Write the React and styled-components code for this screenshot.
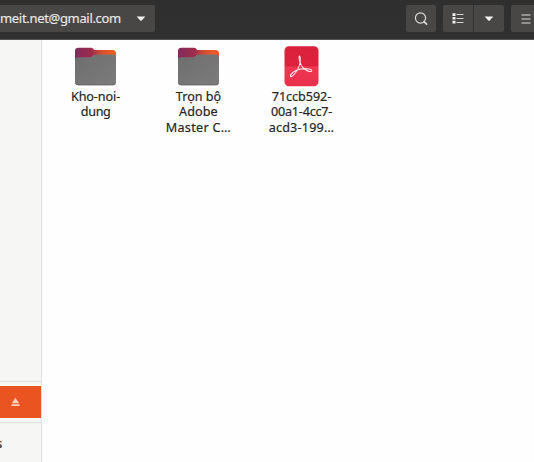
import React from 'react';
import styled, { createGlobalStyle } from 'styled-components';

const GlobalStyle = createGlobalStyle`
  * { box-sizing: border-box; }
  body { margin: 0; overflow: hidden; background: #fefefe; font-family: "Noto Sans", "Open Sans", sans-serif; }
  svg { display: block; flex: none; }
`;

const Window = styled.div`
  width: 534px;
  height: 462px;
  display: flex;
  flex-direction: column;
  overflow: hidden;
`;

const HeaderBar = styled.header`
  height: 40px;
  flex: none;
  display: flex;
  align-items: flex-start;
  padding-top: 5px;
  background: linear-gradient(#2f2f2f, #303030);
  border-bottom: 1px solid #555352;
`;

const PathButton = styled.button`
  width: 155px;
  height: 27px;
  display: flex;
  align-items: center;
  justify-content: space-between;
  padding: 0 9px 0 0;
  border: 0;
  border-radius: 0 2px 2px 0;
  background: #494745;
  color: #eae8e5;
  font: 13px/18px "Noto Sans", sans-serif;
`;

const PathText = styled.span`
  padding-bottom: 2px;
  letter-spacing: -0.32px;
  white-space: nowrap;
  -webkit-text-stroke: 0.15px currentColor;
`;

const Tools = styled.div`
  display: flex;
  margin-left: auto;
  gap: 7px;
`;

const ButtonGroup = styled.div`
  display: flex;
  gap: 1px;
`;

const ToolButton = styled.button`
  width: ${(p) => p.$width}px;
  height: 27px;
  display: flex;
  align-items: center;
  justify-content: ${(p) => (p.$clipped ? 'flex-start' : 'center')};
  padding: 0 0 0 ${(p) => (p.$clipped ? 10 : 0)}px;
  border: 0;
  border-radius: ${(p) => p.$radius || '2px'};
  background: #494745;
`;

const Body = styled.div`
  flex: 1;
  display: flex;
`;

const Sidebar = styled.aside`
  width: 42px;
  display: flex;
  flex-direction: column;
  background: #f6f6f5;
  border-right: 1px solid #e2e2e1;
`;

const Places = styled.div`
  height: 342px;
  border-bottom: 1px solid #dededd;
`;

const MountRow = styled.div`
  height: 32px;
  margin: 4px 0;
  display: flex;
  align-items: center;
  padding-left: 11px;
  background: #e95420;
`;

const OtherRow = styled.div`
  flex: 1;
  border-top: 1px solid #dededd;
  padding-top: 11px;
  color: #303030;
  font-size: 13px;
  line-height: 18px;
  text-indent: -4px;
  -webkit-text-stroke: 0.2px currentColor;
`;

const Files = styled.main`
  flex: 1;
  display: grid;
  grid-template-columns: repeat(3, 103px);
  align-content: start;
  padding: 6px 0 0 2px;
`;

const File = styled.figure`
  margin: 0;
  display: flex;
  flex-direction: column;
  align-items: center;
`;

const FileName = styled.figcaption`
  display: flex;
  flex-direction: column;
  align-items: center;
  color: #262626;
`;

const NameLine = styled.span`
  height: 15.3px;
  font-size: 12.6px;
  line-height: 17px;
  white-space: nowrap;
  letter-spacing: ${(p) => p.$spacing}px;
  margin-right: ${(p) => p.$spacing}px;
  -webkit-text-stroke: 0.2px currentColor;
`;

const Arrow = () => (
  <svg width="10" height="6" viewBox="0 0 10 6">
    <path d="M.7.5h8.6L5.7 4.6Q5 5.2 4.3 4.6Z" fill="#f4f3f1" />
  </svg>
);

const SearchIcon = () => (
  <svg width="14" height="14" viewBox="0 0 14 14" fill="none" stroke="#dddbd8">
    <circle cx="6.5" cy="6" r="5.1" strokeWidth="1.2" />
    <path d="M10 9.700l2.600 2.400" strokeWidth="1.7" strokeLinecap="round" />
  </svg>
);

const ListIcon = () => (
  <svg width="12" height="12" viewBox="0 0 12 12">
    <path d="M.5.3h3v2.600h-3zM.5 4h3v2.600h-3zM.5 7.800h3v2.600h-3z" fill="#f0eeec" />
    <path d="M4.500 1.500h7M4.500 5.500h7M4.500 9.500h7" stroke="#d6d4d1" />
  </svg>
);

const MenuIcon = () => (
  <svg width="10" height="10" viewBox="0 0 10 10">
    <path d="M.5 1h9M.5 5h9M.5 9h9" stroke="#dddbd8" strokeWidth="1.100" />
  </svg>
);

const EjectIcon = () => (
  <svg width="9" height="10" viewBox="0 0 9 10">
    <path d="M4.5.7L8.2 6.3H.8ZM.5 7.200h8v1.800h-8z" fill="#ffd0bb" />
  </svg>
);

const FolderIcon = () => (
  <svg width="42" height="42" viewBox="0 0 42 42">
    <defs>
      <linearGradient id="folderBack">
        <stop offset="0" stopColor="#842a5b" />
        <stop offset=".42" stopColor="#a02d4c" />
        <stop offset=".6" stopColor="#cf4936" />
        <stop offset=".85" stopColor="#eb5a25" />
      </linearGradient>
      <linearGradient id="folderFront" x2="1" y2="1">
        <stop offset="0" stopColor="#6e6e6e" />
        <stop offset="1" stopColor="#7c7c7c" />
      </linearGradient>
    </defs>
    <path d="M0 18V5Q0 1.700 3.500 1.700H16q1.500 0 2.400 1.200Q19.300 4.100 21 4.100H37.500Q41 4.100 41 7.600V18Z" fill="url(#folderBack)" />
    <path d="M0 14Q0 11.200 3 11.200H15q1.500 0 2.700-1.400T20.500 8.400H37.500Q41 8.400 41 12V36.200Q41 39.300 37.500 39.300H3.500Q0 39.300 0 36.200Z" fill="url(#folderFront)" />
    <path d="M.5 36.800q.4 2 2.800 2h34.500q2.200 0 2.700-2" fill="none" stroke="#656565" strokeWidth=".8" />
  </svg>
);

const PdfIcon = () => (
  <svg width="42" height="42" viewBox="0 0 42 42">
    <defs>
      <linearGradient id="pdfSheet" x2="0" y2="1">
        <stop offset="0" stopColor="#d9213b" />
        <stop offset=".49" stopColor="#e0213e" />
        <stop offset=".52" stopColor="#ef3652" />
        <stop offset="1" stopColor="#e9304b" />
      </linearGradient>
    </defs>
    <rect x="3.500" y=".2" width="34" height="40" rx="4.500" fill="url(#pdfSheet)" />
    <path d="M18.800 10.200C17.500 9 17.800 15.500 20.500 19.700C23 23.500 27.300 26.300 30.200 25.300C32.800 23.400 25.200 22 20 23C15 24 9.600 27 9.400 30C9.700 32.600 13.900 28 16.700 23.400C19.100 19 20.300 12.500 18.800 10.200Z" fill="none" stroke="#ffe9ec" strokeWidth="1.050" strokeLinejoin="round" />
  </svg>
);

const files = [
  { icon: FolderIcon, lines: [['Kho-noi-', -0.1], ['dung', -0.3]] },
  { icon: FolderIcon, lines: [['Trọn bộ', 0], ['Adobe', 0.1], ['Master C…', 0.3]] },
  { icon: PdfIcon, lines: [['71ccb592-', -0.05], ['00a1-4cc7-', -0.2], ['acd3-199…', 0.2]] },
];

export default function App() {
  return (
    <Window>
      <GlobalStyle />
      <HeaderBar>
        <PathButton>
          <PathText>meit.net@gmail.com</PathText>
          <Arrow />
        </PathButton>
        <Tools>
          <ToolButton $width={30} aria-label="Search"><SearchIcon /></ToolButton>
          <ButtonGroup>
            <ToolButton $width={30} $radius="2px 0 0 2px" aria-label="List view"><ListIcon /></ToolButton>
            <ToolButton $width={30} $radius="0 2px 2px 0" aria-label="View options"><Arrow /></ToolButton>
          </ButtonGroup>
          <ToolButton $width={23} $clipped $radius="2px 0 0 2px" aria-label="Menu"><MenuIcon /></ToolButton>
        </Tools>
      </HeaderBar>
      <Body>
        <Sidebar>
          <Places />
          <MountRow><EjectIcon /></MountRow>
          <OtherRow>s</OtherRow>
        </Sidebar>
        <Files>
          {files.map(({ icon: Icon, lines }) => (
            <File key={lines[0][0]}>
              <Icon />
              <FileName>
                {lines.map(([text, spacing]) => (
                  <NameLine key={text} $spacing={spacing}>{text}</NameLine>
                ))}
              </FileName>
            </File>
          ))}
        </Files>
      </Body>
    </Window>
  );
}
